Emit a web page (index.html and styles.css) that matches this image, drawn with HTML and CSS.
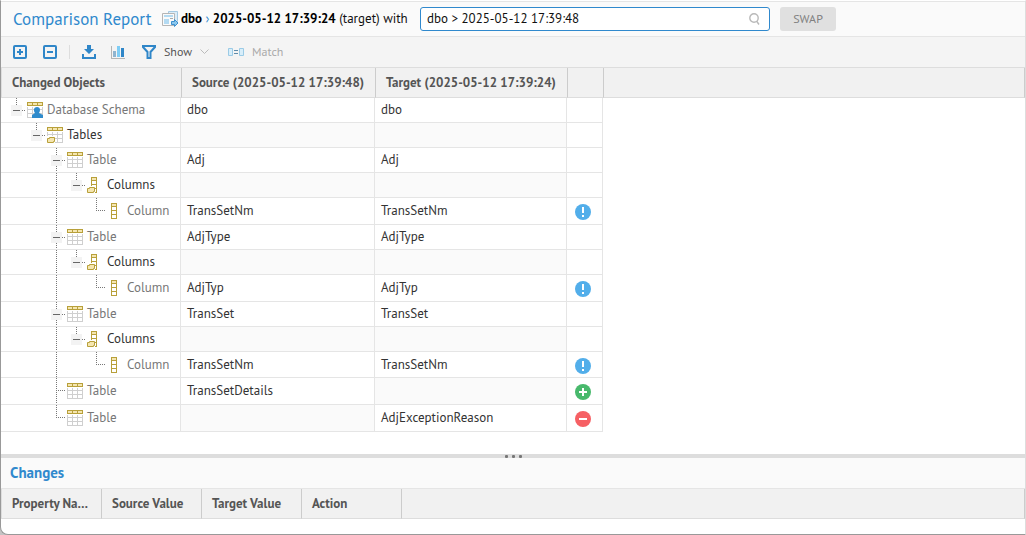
FILE: index.html
```html
<!DOCTYPE html>
<html lang="en">
<head>
<meta charset="utf-8">
<title>Comparison Report</title>
<link rel="stylesheet" href="styles.css">
</head>
<body>
<svg class="sprite" aria-hidden="true">
  <symbol id="table" viewBox="0 0 16 16">
    <path d="M0 5h16v11H0z" fill="#cfcfcf"/>
    <path d="M1 5h4v2H1zM6 5h4v2H6zM11 5h4v2h-4zM1 8h4v3H1zM6 8h4v3H6zM11 8h4v3h-4zM1 12h4v3H1zM6 12h4v3H6zM11 12h4v3h-4z" fill="#fff"/>
    <path d="M0 0h16v4H0z" fill="#b8a03a"/>
    <path d="M1 1h4v2H1zM6 1h4v2H6zM11 1h4v2h-4z" fill="#f5e6b0"/>
  </symbol>
  <symbol id="folder" viewBox="0 0 8 7">
    <path d="M.5 2.5h2v-1h5v4h-1v1h-6z" fill="#f5e6b0" stroke="#b8a03a"/>
  </symbol>
  <symbol id="schema" viewBox="0 0 16 16">
    <use href="#table" width="16" height="16"/>
    <path d="M5 16v-3l3-2c-2-3-1-6 2-6s4 3 2 6l4 2v3z" fill="#2f8bcc"/>
  </symbol>
  <symbol id="tables" viewBox="0 0 16 16">
    <use href="#table" width="16" height="16"/>
    <path d="M0 9h8v7H0z" fill="#fff"/>
    <use href="#folder" y="9" width="8" height="7"/>
  </symbol>
  <symbol id="column" viewBox="0 0 16 16">
    <path d="M4 0h6v16H4z" fill="#b8a03a"/>
    <path d="M5 1h4v2H5z" fill="#f5e6b0"/>
    <path d="M5 4h4v3H5zM5 8h4v3H5zM5 12h4v3H5z" fill="#fff"/>
  </symbol>
  <symbol id="columns" viewBox="0 0 16 16">
    <path d="M4 0h6v16H4z" fill="#b8a03a"/>
    <path d="M5 1h4v2H5z" fill="#f5e6b0"/>
    <path d="M5 4h4v3H5zM5 8h4v3H5zM5 12h4v3H5z" fill="#fff"/>
    <path d="M0 9h8v7H0z" fill="#fff"/>
    <use href="#folder" y="9" width="8" height="7"/>
  </symbol>
  <symbol id="changed" viewBox="0 0 16 16">
    <circle cx="8" cy="8" r="8" fill="#52aeea"/><path d="M7 3h2v6H7zM7 11h2v2H7z" fill="#fff"/>
  </symbol>
  <symbol id="added" viewBox="0 0 16 16">
    <circle cx="8" cy="8" r="8" fill="#48b96c"/><path d="M7 4h2v3h3v2H9v3H7V9H4V7h3z" fill="#fff"/>
  </symbol>
  <symbol id="removed" viewBox="0 0 16 16">
    <circle cx="8" cy="8" r="8" fill="#f66064"/><path d="M4 7h8v2H4z" fill="#fff"/>
  </symbol>
</svg>

<div class="window">
  <header class="title-bar">
    <h1 class="title">Comparison Report</h1>
    <svg class="report-icon" width="17" height="16" viewBox="0 0 17 16" aria-hidden="true">
      <path d="M6.500 3V.5h9v10H14" fill="#dcecf7" stroke="#a5c9e2"/>
      <path d="M.5 2.500h12v12H.5z" fill="#fafafa" stroke="#b5b5b5"/>
      <path d="M2 4h9v2H2z" fill="#b3daf2"/><path d="M2 8h5v5H2z" fill="#b3daf2"/><path d="M8 7h3v1H8z" fill="#aaa"/>
      <path d="M9.500 10.500h3v-2l3.500 3.500-3.500 3.500v-2h-3z" fill="#8cc8ee" stroke="#3b8fce"/>
    </svg>
    <p class="path"><b>dbo</b> <span class="chevron">›</span> <b>2025-05-12 17:39:24</b> (target) with</p>
    <label class="search">
      <input type="text" value="dbo &gt; 2025-05-12 17:39:48" aria-label="Compare with">
      <svg width="11" height="12" viewBox="0 0 11 12" fill="none" stroke="#b9b9b9" stroke-width="1.4" aria-hidden="true"><circle cx="5" cy="5" r="4.200"/><path d="M7.500 8l2.500 3.500"/></svg>
    </label>
    <button class="swap" type="button">SWAP</button>
  </header>

  <nav class="toolbar" aria-label="Report actions">
    <button class="tool" type="button" aria-label="Expand all"><svg width="14" height="14" viewBox="0 0 14 14" fill="none" stroke="#2f86c8" stroke-width="2"><rect x="1" y="1" width="12" height="12" rx="1"/><path d="M4 7h6M7 4v6"/></svg></button>
    <button class="tool" type="button" aria-label="Collapse all"><svg width="14" height="14" viewBox="0 0 14 14" fill="none" stroke="#2f86c8" stroke-width="2"><rect x="1" y="1" width="12" height="12" rx="1"/><path d="M4 7h6"/></svg></button>
    <span class="divider"></span>
    <button class="tool download" type="button" aria-label="Download"><svg width="14" height="14" viewBox="0 0 14 14" fill="#2f86c8"><path d="M5 0h4v4h3l-5 5-5-5h3zM0 9h2v3h10V9h2v5H0z"/></svg></button>
    <button class="tool" type="button" aria-label="Chart"><svg width="15" height="14" viewBox="0 0 15 14"><path d="M0 1h1v12h13v1H0z" fill="#b5b5b5"/><path d="M2 6h3v6H2z" fill="#8fb4cf"/><path d="M6 1h3v11H6z" fill="#7fcdf5"/><path d="M10 3h3v9h-3z" fill="#2f86c8"/></svg></button>
    <button class="tool show" type="button"><svg width="14" height="14" viewBox="0 0 14 14" fill="none" stroke="#2f86c8" stroke-width="2"><path d="M1 1h12v1L8.500 7v6h-3V7L1 2z"/></svg><span class="show-text">Show</span><svg width="9" height="6" viewBox="0 0 9 6" fill="none" stroke="#bbb"><path d="M.5.5l4 4 4-4"/></svg></button>
    <button class="tool match" type="button" disabled><svg width="16" height="8" viewBox="0 0 16 8"><path d="M.5.5h4v7h-4zM11.500.5h4v7h-4z" fill="#d8eefa" stroke="#9bcbe6"/><path d="M6 2h4v1H6zM6 5h4v1H6z" fill="#5f8cab"/></svg>Match</button>
  </nav>

  <main class="report">
    <table class="grid">
      <colgroup><col class="c-object"><col class="c-source"><col class="c-target"><col class="c-status"><col></colgroup>
      <thead><tr><th>Changed Objects</th><th>Source (2025-05-12 17:39:48)</th><th>Target (2025-05-12 17:39:24)</th><th></th><th></th></tr></thead>
      <tbody>
        <tr><td class="tree"><div class="node"><i class="gut up"><button class="toggle" type="button" aria-label="Collapse"></button></i><svg class="icon"><use href="#schema"/></svg><span class="leaf">Database Schema</span></div></td><td>dbo</td><td>dbo</td><td></td></tr>
        <tr><td class="tree"><div class="node"><i class="gut"></i><i class="gut up"><button class="toggle" type="button" aria-label="Collapse"></button></i><svg class="icon"><use href="#tables"/></svg><span>Tables</span></div></td><td class="none"></td><td class="none"></td><td></td></tr>

        <tr><td class="tree"><div class="node"><i class="gut"></i><i class="gut"></i><i class="gut tee"><button class="toggle" type="button" aria-label="Collapse"></button></i><svg class="icon"><use href="#table"/></svg><span class="leaf">Table</span></div></td><td>Adj</td><td>Adj</td><td></td></tr>
        <tr><td class="tree"><div class="node"><i class="gut"></i><i class="gut"></i><i class="gut line"></i><i class="gut up"><button class="toggle" type="button" aria-label="Collapse"></button></i><svg class="icon"><use href="#columns"/></svg><span>Columns</span></div></td><td class="none"></td><td class="none"></td><td></td></tr>
        <tr class="tall"><td class="tree"><div class="node"><i class="gut"></i><i class="gut"></i><i class="gut line"></i><i class="gut"></i><i class="gut up"></i><svg class="icon"><use href="#column"/></svg><span class="leaf">Column</span></div></td><td>TransSetNm</td><td>TransSetNm</td><td class="status"><svg role="img" aria-label="Changed"><use href="#changed"/></svg></td></tr>

        <tr><td class="tree"><div class="node"><i class="gut"></i><i class="gut"></i><i class="gut tee"><button class="toggle" type="button" aria-label="Collapse"></button></i><svg class="icon"><use href="#table"/></svg><span class="leaf">Table</span></div></td><td>AdjType</td><td>AdjType</td><td></td></tr>
        <tr><td class="tree"><div class="node"><i class="gut"></i><i class="gut"></i><i class="gut line"></i><i class="gut up"><button class="toggle" type="button" aria-label="Collapse"></button></i><svg class="icon"><use href="#columns"/></svg><span>Columns</span></div></td><td class="none"></td><td class="none"></td><td></td></tr>
        <tr class="tall"><td class="tree"><div class="node"><i class="gut"></i><i class="gut"></i><i class="gut line"></i><i class="gut"></i><i class="gut up"></i><svg class="icon"><use href="#column"/></svg><span class="leaf">Column</span></div></td><td>AdjTyp</td><td>AdjTyp</td><td class="status"><svg role="img" aria-label="Changed"><use href="#changed"/></svg></td></tr>

        <tr><td class="tree"><div class="node"><i class="gut"></i><i class="gut"></i><i class="gut tee"><button class="toggle" type="button" aria-label="Collapse"></button></i><svg class="icon"><use href="#table"/></svg><span class="leaf">Table</span></div></td><td>TransSet</td><td>TransSet</td><td></td></tr>
        <tr><td class="tree"><div class="node"><i class="gut"></i><i class="gut"></i><i class="gut line"></i><i class="gut up"><button class="toggle" type="button" aria-label="Collapse"></button></i><svg class="icon"><use href="#columns"/></svg><span>Columns</span></div></td><td class="none"></td><td class="none"></td><td></td></tr>
        <tr class="mid"><td class="tree"><div class="node"><i class="gut"></i><i class="gut"></i><i class="gut line"></i><i class="gut"></i><i class="gut up"></i><svg class="icon"><use href="#column"/></svg><span class="leaf">Column</span></div></td><td>TransSetNm</td><td>TransSetNm</td><td class="status"><svg role="img" aria-label="Changed"><use href="#changed"/></svg></td></tr>

        <tr class="tall"><td class="tree"><div class="node"><i class="gut"></i><i class="gut"></i><i class="gut tee"></i><svg class="icon"><use href="#table"/></svg><span class="leaf">Table</span></div></td><td>TransSetDetails</td><td class="none"></td><td class="status"><svg role="img" aria-label="Added"><use href="#added"/></svg></td></tr>
        <tr class="tall"><td class="tree"><div class="node"><i class="gut"></i><i class="gut"></i><i class="gut up"></i><svg class="icon"><use href="#table"/></svg><span class="leaf">Table</span></div></td><td class="none"></td><td>AdjExceptionReason</td><td class="status"><svg role="img" aria-label="Removed"><use href="#removed"/></svg></td></tr>
      </tbody>
    </table>
  </main>

  <div class="splitter" role="separator"><span></span><span></span><span></span></div>

  <section class="changes">
    <h2 class="changes-title">Changes</h2>
    <table class="grid">
      <colgroup><col class="c-prop"><col class="c-prop"><col class="c-prop"><col class="c-prop"><col></colgroup>
      <thead><tr><th>Property Name</th><th>Source Value</th><th>Target Value</th><th>Action</th><th></th></tr></thead>
    </table>
  </section>
</div>
</body>
</html>
```
FILE: styles.css
```css
* { box-sizing: border-box; }

body {
  margin: 0;
  background: #c4c4c4;
  color: #333;
  font: 13px/16px "PT Sans", "Open Sans", "Noto Sans", sans-serif;
}

button, input { font: inherit; color: inherit; }

.sprite { position: absolute; width: 0; height: 0; }

.window {
  display: flex;
  flex-direction: column;
  min-height: 100vh;
  border: 1px solid #999;
  border-top-color: #fff;
  border-right-color: #ddd;
  border-bottom-left-radius: 8px;
  background: #fff;
}

.title-bar {
  display: flex;
  align-items: center;
  height: 36px;
  padding-left: 12px;
  border-top: 1px solid #e5e5e5;
  border-bottom: 1px solid #e5e5e5;
  background: #fafafa;
}

.title {
  flex: none;
  width: 149px;
  margin: 0;
  color: #3089cd;
  font-size: 17px;
  font-weight: 400;
  line-height: 24px;
  white-space: nowrap;
}

.report-icon { flex: none; margin-right: 2px; }

.path {
  flex: none;
  width: 239px;
  margin: 0;
  color: #111;
  white-space: nowrap;
}

.path b { color: #000; }
.chevron { color: #3089cd; }

.search {
  display: flex;
  align-items: center;
  width: 350px;
  height: 24px;
  padding: 0 9px 0 6px;
  border: 1px solid #3089cd;
  border-radius: 3px;
  background: #fff;
  color: #111;
}

.search input {
  flex: 1;
  min-width: 0;
  padding: 0;
  border: 0;
  outline: 0;
  background: none;
}

.swap {
  width: 56px;
  height: 24px;
  margin-left: 10px;
  padding: 0;
  border: 0;
  border-radius: 3px;
  background: #e0e0e0;
  color: #808080;
  font-size: 12px;
}

.toolbar {
  display: flex;
  align-items: center;
  height: 31px;
  padding-left: 12px;
  border-bottom: 1px solid #ddd;
  background: #f4f4f4;
}

.tool {
  display: flex;
  align-items: center;
  margin-right: 16px;
  padding: 0;
  border: 0;
  background: none;
  color: #555;
}

.download { margin-right: 15px; }

.divider {
  width: 1px;
  height: 14px;
  margin: 0 12px 0 -4px;
  background: #ddd;
}

.show, .match { font-size: 12px; }
.show-text { width: 36px; margin-left: 8px; text-align: left; }
.match { gap: 8px; margin-left: 3px; color: #aaa; }

.report { flex: 1; }

.grid {
  width: 100%;
  table-layout: fixed;
  border-collapse: separate;
  border-spacing: 0;
}

.c-object { width: 180px; }
.c-source { width: 194px; }
.c-target { width: 192px; }
.c-status { width: 36px; }
.c-prop { width: 100px; }

.grid th {
  height: 30px;
  padding: 0 10px;
  overflow: hidden;
  border-bottom: 1px solid #ddd;
  border-left: 1px solid #ccc;
  background: #f1f1f1;
  color: #555;
  font-weight: 700;
  text-align: left;
  text-overflow: ellipsis;
  white-space: nowrap;
}

.grid th:first-child { border-left-color: #ddd; }
.grid th:last-child { border-right: 1px solid #ccc; }

.grid td {
  height: 25px;
  padding: 0 6px;
  border-right: 1px solid #e5e5e5;
  border-bottom: 1px solid #e5e5e5;
  white-space: nowrap;
}

.grid .none { background: #fafafa; }

.node { display: flex; align-items: center; height: 24px; }
.mid .node { height: 25px; }
.tall .node { height: 26px; }
.leaf { color: #777; }

.icon { flex: none; width: 16px; height: 16px; margin-right: 4px; }

.gut {
  display: flex;
  flex: none;
  align-items: center;
  align-self: stretch;
  width: 20px;
  padding-left: 4px;
  background-repeat: no-repeat;
}

.line {
  background-image: repeating-linear-gradient(#777 0 1px, transparent 1px 2px);
  background-position: 9px 0;
  background-size: 1px 100%;
}

.up, .tee {
  background-image:
    repeating-linear-gradient(#777 0 1px, transparent 1px 2px),
    repeating-linear-gradient(90deg, #777 0 1px, transparent 1px 2px);
  background-position: 9px 0, 9px 12px;
  background-size: 1px 12px, 9px 1px;
}

.tee { background-size: 1px 100%, 9px 1px; }

.toggle {
  width: 11px;
  height: 11px;
  padding: 0;
  border: 0;
  background: linear-gradient(#666, #666) center / 7px 1px no-repeat #f3f3f3;
}

.grid .status { padding: 2px 0 0 8px; }
.status svg { display: block; width: 16px; height: 16px; }

.splitter {
  display: flex;
  align-items: center;
  justify-content: center;
  gap: 4px;
  height: 4px;
  background: #ddd;
}

.splitter span { width: 3px; height: 3px; border-radius: 1px; background: #777; }

.changes { padding-bottom: 15px; }

.changes-title {
  margin: 0;
  padding: 3px 9px;
  border-bottom: 1px solid #e5e5e5;
  background: #fafafa;
  color: #3089cd;
  font-size: 15px;
  line-height: 24px;
}
```
